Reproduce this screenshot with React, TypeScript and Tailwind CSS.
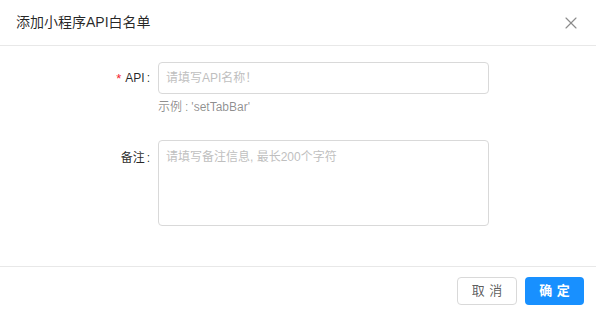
import { X } from "lucide-react";

const font = { fontFamily: '"Liberation Sans", "Noto Sans CJK SC", sans-serif' };

export default function App() {
  return (
    <div className="w-[596px] h-[313px] bg-white flex flex-col text-[12px]" style={font}>
      {/* header */}
      <div className="h-[46px] border-b border-[#e8e8e8] flex items-center justify-between pl-[16px] pr-[15px]">
        <span className="text-[14px] text-[rgba(0,0,0,0.85)]">添加小程序API白名单</span>
        <X size={20} strokeWidth={1.4} className="text-[#8c8c8c]" />
      </div>

      {/* body */}
      <div className="h-[220px] pt-[16px]">
        <div className="flex gap-[8px]">
          <div className="w-[150px] h-[32px] flex items-center justify-end text-[rgba(0,0,0,0.85)]">
            <span className="text-[#f5222d] mr-[4px] text-[13px] leading-none">*</span>
            API<span className="ml-[2px]">:</span>
          </div>
          <div className="flex flex-col">
            <input
              className="w-[331px] h-[32px] border border-[#d9d9d9] rounded-[4px] px-[7px] text-[12px] outline-none placeholder:text-[#bfbfbf]"
              placeholder="请填写API名称！"
            />
            <div className="mt-[4px] leading-[18px] text-[rgba(0,0,0,0.45)]">示例<span className="mx-[3px]">:</span>'setTabBar'</div>
          </div>
        </div>

        <div className="flex gap-[8px] mt-[24px]">
          <div className="w-[150px] pt-[9px] leading-[18px] text-right text-[rgba(0,0,0,0.85)]">
            备注<span className="ml-[2px]">:</span>
          </div>
          <textarea
            className="w-[331px] h-[86px] border border-[#d9d9d9] rounded-[4px] px-[7px] pt-[7px] leading-[18px] text-[12px] outline-none resize-none placeholder:text-[#bfbfbf]"
            placeholder="请填写备注信息, 最长200个字符"
          />
        </div>
      </div>

      {/* footer */}
      <div className="border-t border-[#e8e8e8] flex justify-end gap-[8px] pt-[10px] pr-[12px]">
        <button className="w-[60px] h-[28px] border border-[#d9d9d9] rounded-[4px] bg-white text-[13px] text-[rgba(0,0,0,0.65)]">
          <span className="tracking-[0.34em] mr-[-0.34em]">取消</span>
        </button>
        <button className="w-[59px] h-[28px] rounded-[4px] bg-[#1890ff] text-[13px] font-semibold text-white">
          <span className="tracking-[0.34em] mr-[-0.34em]">确定</span>
        </button>
      </div>
    </div>
  );
}
